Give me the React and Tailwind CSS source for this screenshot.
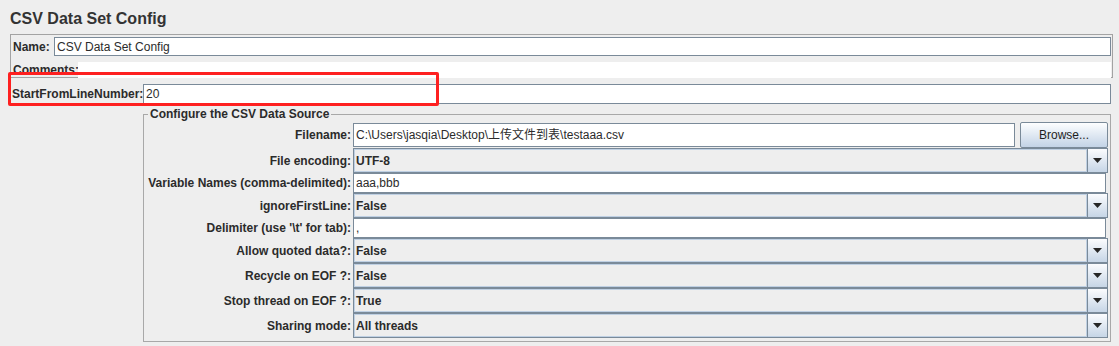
import React from "react";

function Arrow() {
	return (
		<div className="flex w-[20px] shrink-0 items-center justify-center border-l border-[#7a8a99] bg-gradient-to-b from-[#fbfcfe] to-[#c6d5e6]">
			<svg width="9" height="5" viewBox="0 0 9 5">
				<polygon points="0,0 9,0 4.5,5" fill="#262626" />
			</svg>
		</div>
	);
}

function Combo({ value }) {
	return (
		<div className="flex h-[25px] flex-1 border border-[#7a8a99] bg-[#eeeeee]">
			<div className="flex flex-1 items-center pl-[2px] font-bold shadow-[inset_1px_1px_0_#bfd0e3,inset_-1px_-1px_0_#bfd0e3]">
				{value}
			</div>
			<Arrow />
		</div>
	);
}

function TextField({ value, className = "" }) {
	return (
		<div className={"flex items-center border border-[#7a8a99] bg-white pl-[2px] " + className}>
			<span className="whitespace-nowrap">{value}</span>
		</div>
	);
}

function Row({ label, children, h }) {
	return (
		<div className={"flex items-center " + h}>
			<div className="w-[209px] shrink-0 pr-[2px] text-right font-bold whitespace-nowrap">{label}</div>
			<div className="flex flex-1 items-center">{children}</div>
		</div>
	);
}

export default function App() {
	return (
		<div className="relative h-[346px] w-[1119px] overflow-hidden bg-[#eeeeee] font-['Liberation_Sans','Noto_Sans_CJK_SC',sans-serif] text-[12px] leading-[14px] text-[#2b2b2b]">
			<div className="h-[34px] pl-[10px] pt-[9px] text-[16px] leading-[20px] font-bold text-[#333]">
				CSV Data Set Config
			</div>

			<div className="ml-[10px] h-[44px] w-[1103px] border border-[#a3a3a3] px-px pt-px">
				<div className="mt-px flex h-[19px] items-center">
					<div className="w-[42px] shrink-0 pl-px font-bold">Name:</div>
					<TextField value="CSV Data Set Config" className="h-[19px] flex-1" />
				</div>
				<div className="mt-[6px] flex h-[16px]">
					<div className="w-[66px] shrink-0 pl-px pt-[1px] font-bold whitespace-nowrap">Comments:</div>
					<div className="flex-1 bg-white" />
				</div>
			</div>

			<div className="mt-[6px] flex h-[20px] items-center pl-[12px] pr-[8px]">
				<div className="w-[131px] shrink-0 font-bold">StartFromLineNumber:</div>
				<TextField value="20" className="h-[20px] flex-1" />
			</div>

			<fieldset className="ml-[143px] mt-[3px] w-[968px] border border-[#a8a8a8] pb-[3px] pr-[2px] pt-[1px]">
				<legend className="ml-[4px] px-[2px] text-[12px] leading-[14px] font-bold">
					Configure the CSV Data Source
				</legend>
				<Row label="Filename:" h="h-[26px]">
					<TextField
						value="C:\Users\jasqia\Desktop\上传文件到表\testaaa.csv"
						className="h-[24px] w-[662px]"
					/>
					<div className="ml-auto flex h-[26px] w-[88px] items-center justify-center rounded-[2px] border border-[#7a8a99] bg-gradient-to-b from-[#fdfeff] to-[#c3d3e6] text-[#1e1e1e]">
						Browse...
					</div>
				</Row>
				<Row label="File encoding:" h="h-[25px]">
					<Combo value="UTF-8" />
				</Row>
				<Row label="Variable Names (comma-delimited):" h="h-[20px]">
					<TextField value="aaa,bbb" className="mr-[2px] h-[20px] flex-1" />
				</Row>
				<Row label="ignoreFirstLine:" h="h-[25px]">
					<Combo value="False" />
				</Row>
				<Row label="Delimiter (use '\t' for tab):" h="h-[20px]">
					<TextField value="," className="mr-[2px] h-[20px] flex-1" />
				</Row>
				<Row label="Allow quoted data?:" h="h-[25px]">
					<Combo value="False" />
				</Row>
				<Row label="Recycle on EOF ?:" h="h-[25px]">
					<Combo value="False" />
				</Row>
				<Row label="Stop thread on EOF ?:" h="h-[25px]">
					<Combo value="True" />
				</Row>
				<Row label="Sharing mode:" h="h-[25px]">
					<Combo value="All threads" />
				</Row>
			</fieldset>

			<div className="absolute left-[8px] top-[72px] h-[34px] w-[431px] rounded-[2px] border-[3px] border-[#fe2020]" />
		</div>
	);
}
